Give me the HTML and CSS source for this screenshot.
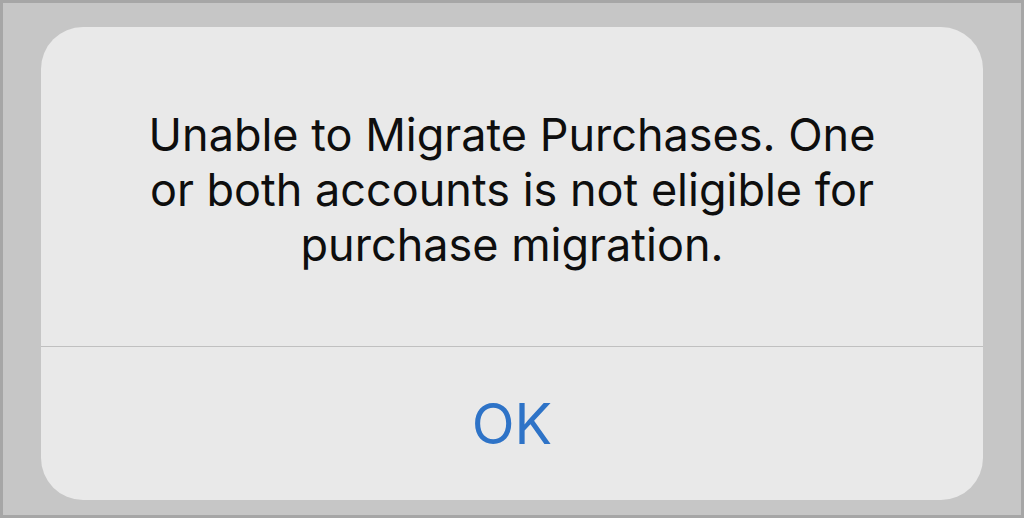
FILE: index.html
```html
<!DOCTYPE html>
<html lang="en">
<head>
<meta charset="utf-8">
<title>Alert</title>
<link rel="stylesheet" href="styles.css">
</head>
<body>
<div class="frame">
  <div class="alert">
    <div class="alert-body">
      <p class="alert-message">Unable to Migrate Purchases. One<br>or both accounts is not eligible for<br>purchase migration.</p>
    </div>
    <div class="alert-divider"></div>
    <div class="alert-actions">
      <span class="alert-button">OK</span>
    </div>
  </div>
</div>
</body>
</html>
```

FILE: styles.css
```css
html, body {
  margin: 0;
  padding: 0;
}
body {
  width: 1024px;
  height: 518px;
  overflow: hidden;
}
.frame {
  box-sizing: border-box;
  width: 1024px;
  height: 518px;
  background: #c6c6c6;
  border: 3px solid #a6a6a6;
  padding: 24px 38px 0 38px;
}
.alert {
  width: 942px;
  height: 473px;
  background: #e9e9e9;
  border-radius: 42px;
  display: flex;
  flex-direction: column;
  font-family: Inter, "Noto Sans", sans-serif;
}
.alert-body {
  height: 319px;
  box-sizing: border-box;
  padding-top: 80px;
}
.alert-message {
  margin: 0;
  text-align: center;
  font-size: 45px;
  line-height: 55px;
  color: #0e0e0e;
  font-weight: 400;
}
.alert-divider {
  height: 1px;
  background: #c0c0c0;
}
.alert-actions {
  flex: 1;
  display: flex;
  align-items: center;
  justify-content: center;
}
.alert-button {
  font-size: 56px;
  color: #2e73c7;
  line-height: 1;
}
```
